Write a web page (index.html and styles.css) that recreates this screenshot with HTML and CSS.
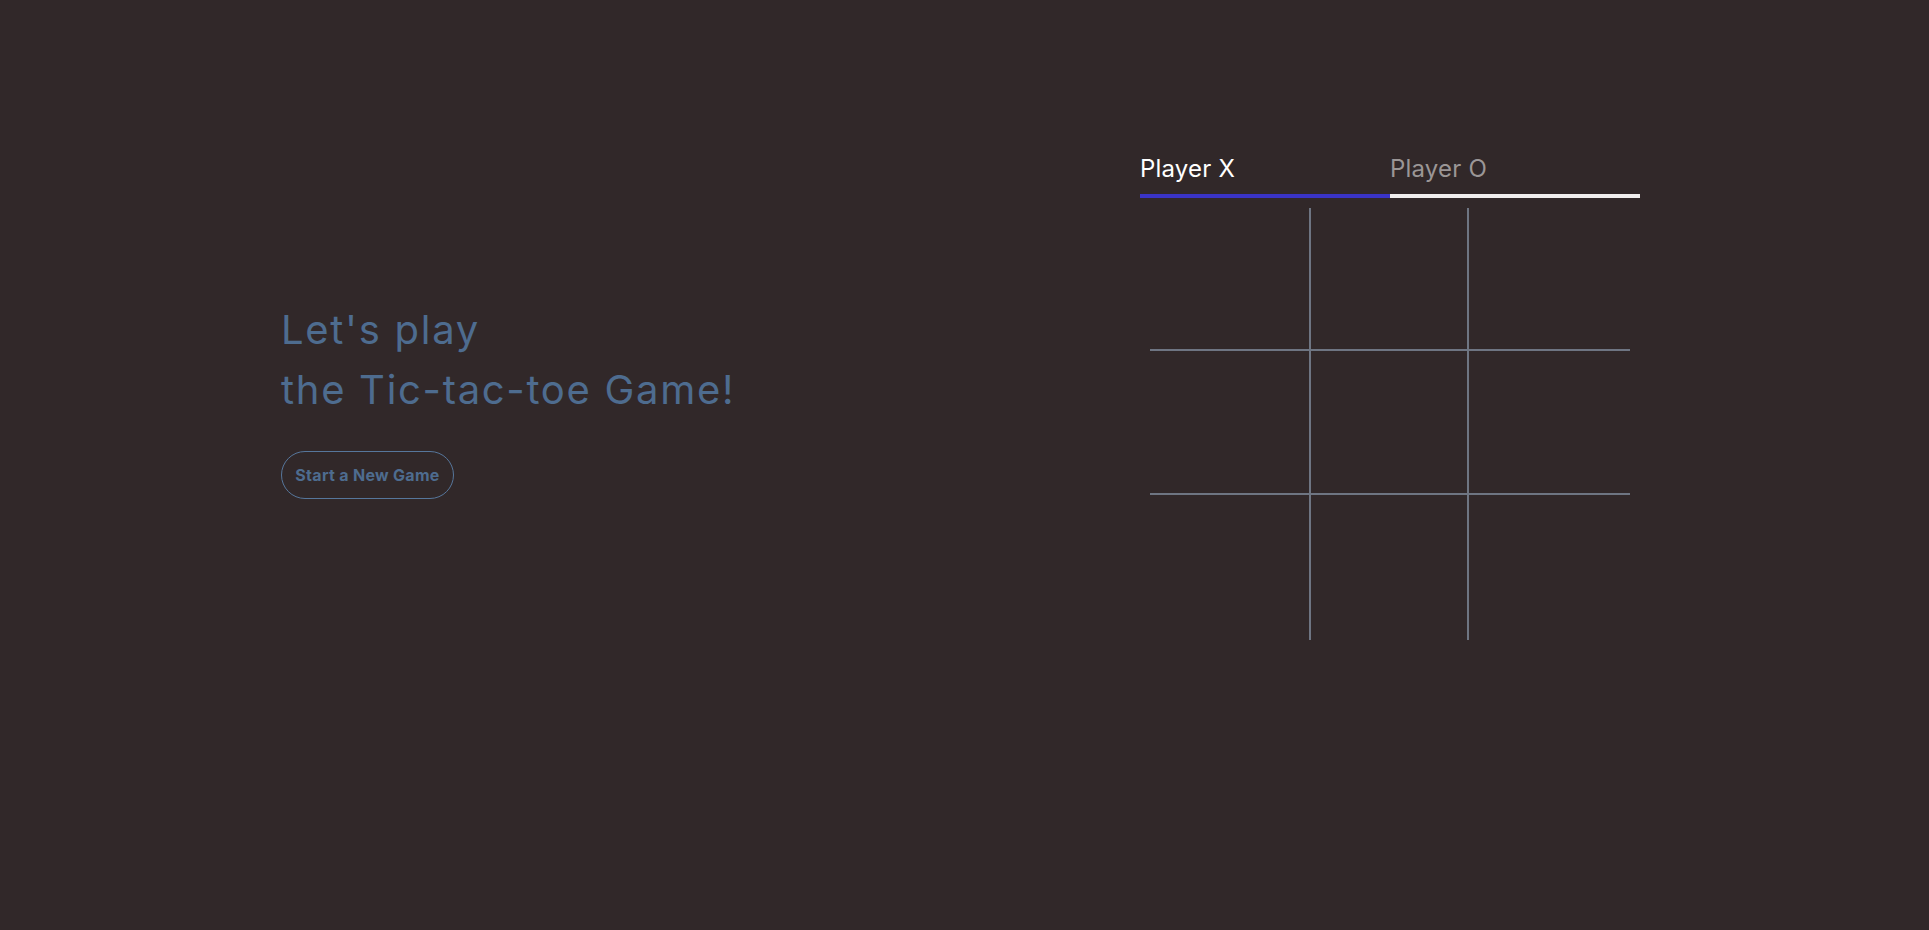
FILE: index.html
```html
<!DOCTYPE html>
<html lang="en">
<head>
<meta charset="utf-8">
<title>Tic-tac-toe</title>
<link rel="stylesheet" href="styles.css">
</head>
<body>
<main class="page">
  <section class="intro">
    <h1 class="title">Let's play<br>the Tic-tac-toe Game!</h1>
    <button class="new-game" type="button">Start a New Game</button>
  </section>
  <section class="game">
    <div class="tabs">
      <div class="tab tab-active">Player X</div>
      <div class="tab">Player O</div>
    </div>
    <div class="board">
      <div class="cell"></div>
      <div class="cell mid-col"></div>
      <div class="cell"></div>
      <div class="cell mid-row"></div>
      <div class="cell mid-col mid-row"></div>
      <div class="cell mid-row"></div>
      <div class="cell"></div>
      <div class="cell mid-col"></div>
      <div class="cell"></div>
    </div>
  </section>
</main>
</body>
</html>
```
FILE: styles.css
```css
* { box-sizing: border-box; }
html, body {
  margin: 0;
  height: 100%;
  background: #312829;
}
body {
  font-family: Inter, "Open Sans", sans-serif;
  color: #4e6c8f;
}
.page {
  display: flex;
  align-items: flex-start;
  padding: 146px 0 0 281px;
}
.intro {
  width: 859px;
  flex: none;
  margin-top: 154px;
}
.title {
  margin: 0;
  font-size: 40px;
  font-weight: 400;
  line-height: 60px;
  color: #4e6c8f;
  letter-spacing: 1.7px;
}
.new-game {
  display: block;
  margin-top: 31px;
  height: 48px;
  width: 173px;
  border: 1px solid #56769b;
  border-radius: 24px;
  background: transparent;
  color: #4e6c8f;
  font-family: Inter, "Open Sans", sans-serif;
  font-weight: 700;
  font-size: 16px;
  letter-spacing: 0.3px;
  padding: 0;
}
.game {
  width: 500px;
  flex: none;
}
.tabs {
  display: flex;
}
.tab {
  flex: 1;
  font-size: 24px;
  line-height: 45px;
  padding-bottom: 3px;
  letter-spacing: 0.2px;
  color: #9b9696;
  border-bottom: 4px solid #f0eeee;
}
.tab-active {
  color: #ffffff;
  border-bottom-color: #3a34c6;
}
.board {
  margin: 10px 10px 0;
  display: grid;
  grid-template-columns: 159px 160px 161px;
  grid-template-rows: 141px 146px 145px;
}
.cell { border: 0 solid #6e7582; }
.mid-col { border-left-width: 2px; border-right-width: 2px; }
.mid-row { border-top-width: 2px; border-bottom-width: 2px; }
```
